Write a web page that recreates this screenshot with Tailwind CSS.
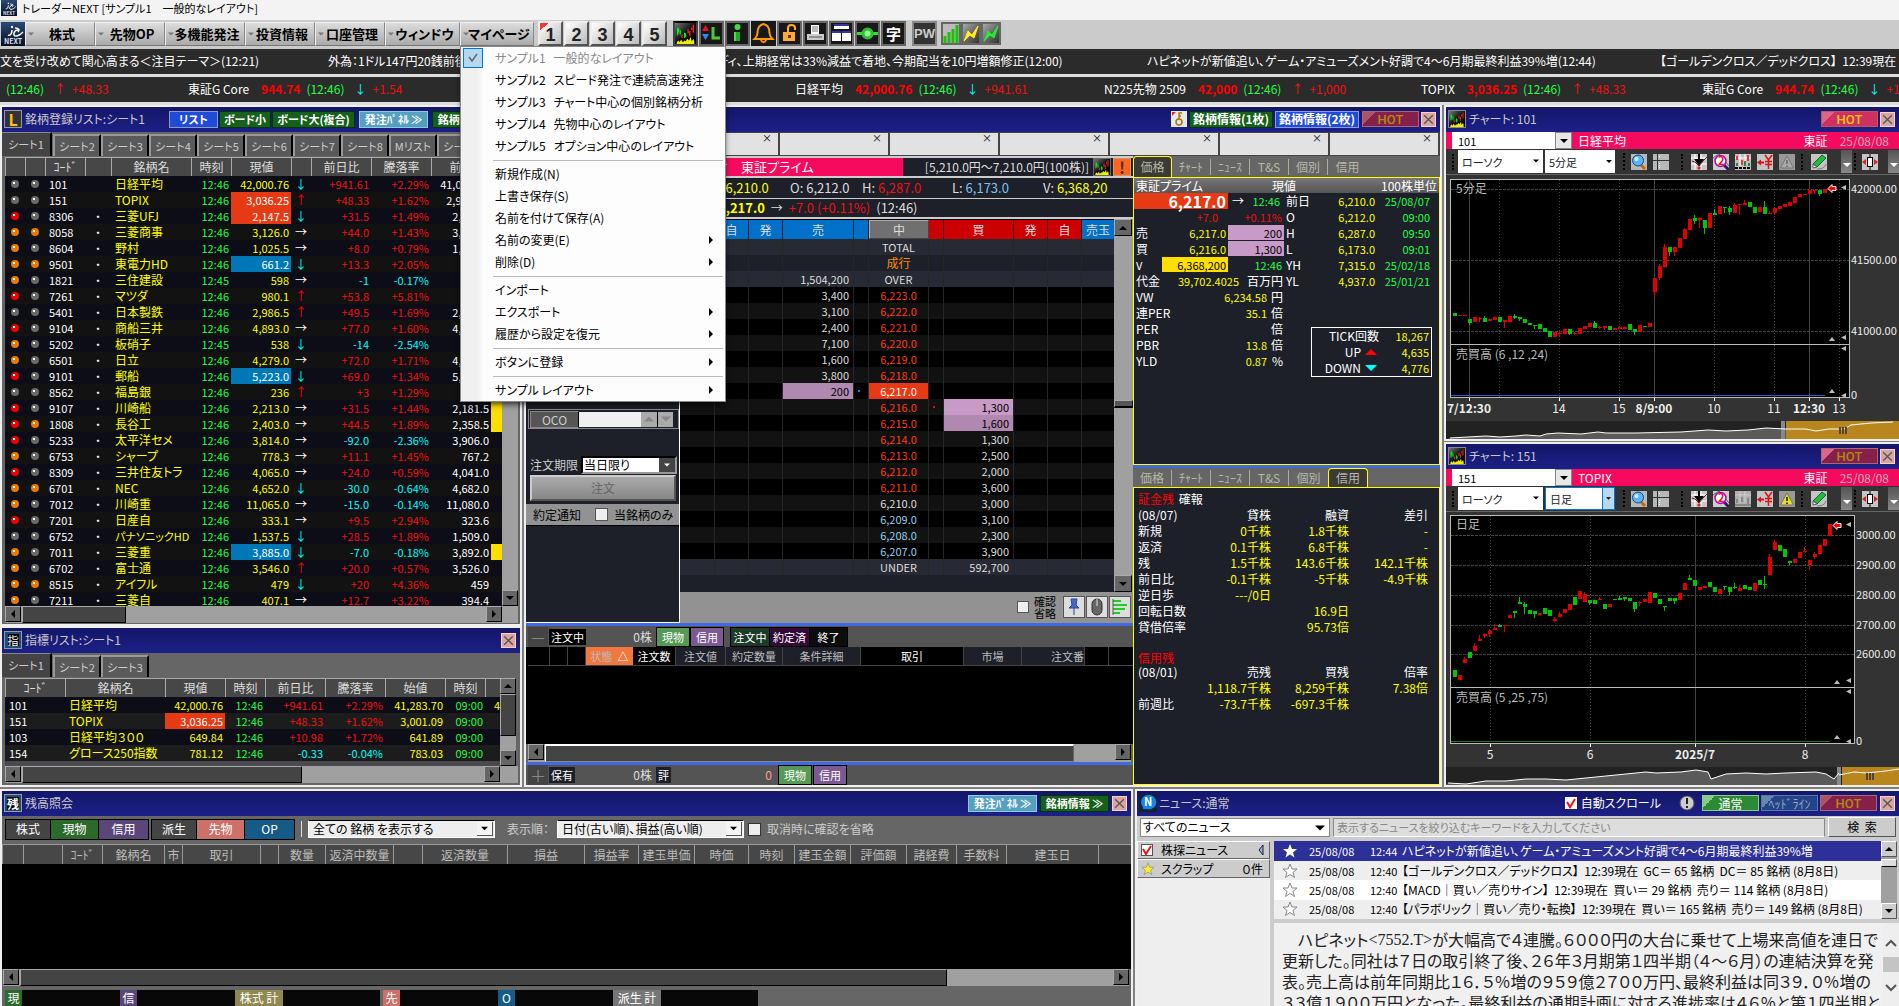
<!DOCTYPE html>
<html lang="ja">
<head>
    <meta charset="UTF-8">
    <meta name="viewport" content="width=device-width, initial-scale=1.0">
    <title>トレーダーNEXT [サンプル1 一般的なレイアウト]</title>
    <script src="https://cdn.jsdelivr.net/npm/@tailwindcss/browser@4"></script>
    <style>
        body {
            font-family: 'Noto Sans CJK JP', sans-serif;
            font-feature-settings: 'palt';
        }
        button, input, select { font-feature-settings: inherit; }
        table { border-collapse: separate; border-spacing: 0; }
    </style>
</head>
<body class="h-screen overflow-hidden flex flex-col bg-[#808080] text-xs leading-4 text-white whitespace-nowrap">

    <!-- Icon sprites -->
    <svg width="0" height="0" class="absolute">
        <defs>
            <linearGradient id="dark" x1="0" y1="0" x2="1" y2="1"><stop offset="0" stop-color="#777"/><stop offset=".5" stop-color="#111"/><stop offset="1" stop-color="#000"/></linearGradient>
            <linearGradient id="night" x1="0" y1="0" x2="0" y2="1"><stop offset="0" stop-color="#2a4a78"/><stop offset="1" stop-color="#04101f"/></linearGradient>
        </defs>
        <symbol id="up" viewBox="0 0 8 8"><path d="M0 6 4 2l4 4z" fill="currentColor"/></symbol>
        <symbol id="down" viewBox="0 0 8 8"><path d="M0 2l4 4 4-4z" fill="currentColor"/></symbol>
        <symbol id="left" viewBox="0 0 8 8"><path d="M6 0 2 4l4 4z" fill="currentColor"/></symbol>
        <symbol id="right" viewBox="0 0 8 8"><path d="M2 0l4 4-4 4z" fill="currentColor"/></symbol>
        <symbol id="close" viewBox="0 0 15 15"><path d="M2.500 2.500l10 10M12.500 2.500l-10 10" stroke="#555" stroke-width="1.500"/></symbol>
        <symbol id="logo" viewBox="0 0 24 24"><rect width="24" height="24" fill="url(#night)"/><path d="M7 13c2 1 4-1 4-5M14 6c4 0 5 2 3 4M17 8c-4 0-6 6-2 6 3 0 5-2 7-4" stroke="#fff" stroke-width="1.500" fill="none"/><circle cx="11" cy="5" r="1.200" fill="#fff"/><text x="3" y="22" font-size="7" font-weight="700" fill="#dde">NEXT</text></symbol>
        <symbol id="chart" viewBox="0 0 24 24"><rect width="24" height="24" fill="url(#dark)"/><path d="M3 6v8M4 5v6M11 11v6M12 12v4M6 8v5" stroke="#0e2" stroke-width="1.500"/><path d="M8 13v4M15 7v5M17 9v6M21 2v9M19 5v3" stroke="#f22" stroke-width="1.500"/><path d="M2 24v-2l2-2 1 2 2-3 2 3 2-2 1 1 2-3 2 2 2-4 1 5 2-3 1 3v3z" fill="#ee0"/></symbol>
        <symbol id="warn" viewBox="0 0 16 16"><rect width="16" height="16" fill="currentColor"/><path d="M8 2 14.500 14h-13z" fill="#e8e020" stroke="#776" /><path d="M8 6v4M8 11.500v1.500" stroke="#111" stroke-width="1.500"/></symbol>
        <symbol id="lens" viewBox="0 0 16 16"><rect width="16" height="16" fill="#b8b8b8"/><path d="M10 11l4 4" stroke="#c60" stroke-width="3"/><circle cx="7" cy="6.500" r="5.500" fill="#5ab4f8" stroke="#124a90"/><circle cx="5.500" cy="5" r="2" fill="#d8f0ff"/></symbol>
        <symbol id="cross" viewBox="0 0 16 16"><rect width="16" height="16" fill="#b8b8b8"/><path d="M0 6.500h16M4.500 0v16" stroke="#243a2a"/><path d="M6.500 2v2M6.500 9v5" stroke="#fff" stroke-dasharray="1 1"/></symbol>
        <symbol id="trend" viewBox="0 0 16 16"><rect width="16" height="16" fill="#c8c8c8"/><path d="M4 0v16M10 0v16M0 4h16M0 10h16" stroke="#fff"/><path d="M1 7l3 1 4 4 4-5 4-4" stroke="#622" fill="none"/><path d="M8 0v7M5 6h6l-3 4z" stroke="#000" stroke-width="2"/><path d="M8 12l2 2-2 2-2-2z" fill="#e22"/></symbol>
        <symbol id="lens2" viewBox="0 0 16 16"><rect width="16" height="16" fill="#ccc"/><path d="M0 4l6-4 10 12" stroke="#284" fill="none"/><path d="M11 11l5 5" stroke="#317" stroke-width="3"/><circle cx="7.500" cy="7" r="5.500" fill="#fff" stroke="#b0b" stroke-width="1.500"/><text x="5" y="11" font-size="11" font-weight="700" fill="#e11">2</text></symbol>
        <symbol id="bars" viewBox="0 0 16 16"><rect width="16" height="16" fill="#c0c0c0"/><path d="M5 0v12M10 0v12M0 4h16" stroke="#fff"/><path d="M2 2v4M7 6v5M13 1v6" stroke="#e33" stroke-width="2"/><path d="M2 9v3M10 7v5M14 9v3" stroke="#284" stroke-width="2"/><path d="M0 14h16" stroke="#000" stroke-width="2" stroke-dasharray="3 1"/></symbol>
        <symbol id="barsoff" viewBox="0 0 16 16"><rect width="16" height="16" fill="#b0b0b0"/><path d="M5 0v12M10 0v12M0 4h16" stroke="#ccc"/><path d="M2 8v4M7 6v5M13 7v6M0 14h16" stroke="#888" stroke-width="2"/></symbol>
        <symbol id="yen" viewBox="0 0 16 16"><rect width="16" height="16" fill="#c4c4c4"/><path d="M0 8.500l4-3v6z" fill="#d11"/><path d="M3 8.500h4" stroke="#d11" stroke-width="2"/><path d="M8 1l3.500 5L15 1M8 7.500h7M8 10.500h7M11.500 6v9" stroke="#d11" stroke-width="1.500" fill="none"/></symbol>
        <symbol id="pencil" viewBox="0 0 16 16"><rect width="16" height="16" fill="#c4c4c4"/><path d="M2 10 11 1l4 3-9 9z" fill="#2b3" stroke="#164"/><path d="M2 10l4 3-4 1z" fill="#fff" stroke="#555"/><path d="M6 15c4 0 8-1 9-5" stroke="#777" fill="none"/></symbol>
        <symbol id="candle" viewBox="0 0 16 16"><rect width="16" height="16" fill="#c4c4c4"/><path d="M8 0v16" stroke="#000"/><rect x="5.500" y="3.500" width="5" height="9" fill="#fff" stroke="#000"/><path d="M4 5v6L0 8zM12 5v6l4-3z" fill="#d22"/></symbol>
        <symbol id="star" viewBox="0 0 16 16"><path d="M8 1l2 5h5l-4 3.500 1.500 5L8 11.500 3.500 14.500 5 9.500 1 6h5z"/></symbol>
    </svg>

    <!-- Window title -->
    <header class="flex h-5 shrink-0 items-center gap-1 bg-[#f3f3f3] pl-px pb-1 text-black">
        <svg class="size-4"><use href="#logo"/></svg>
        <h1 class="pl-px text-[11px]">トレーダーNEXT [サンプル1　一般的なレイアウト]</h1>
    </header>

    <!-- Menu bar -->
    <nav class="flex h-[29px] shrink-0 items-center bg-[#cbcbcb] pb-0.5 text-[13px] font-bold text-black">
        <svg class="ml-px size-6 shrink-0"><use href="#logo"/></svg>
        <div id="menus" class="flex"></div>
        <div class="ml-1 flex gap-px" id="pages"></div>
        <div class="ml-1.5 flex gap-px">
            <button aria-label="チャート" class="size-[25px] border-2 border-[#444] border-t-black"><svg class="size-full"><use href="#chart"/></svg></button>
            <button aria-label="リスト" class="size-[25px] border-2 border-[#666] bg-[#181818]"><svg viewBox="0 0 21 21"><path d="M1 8 4.500 2 8 8z" fill="#e11"/><path d="M1 11l3.500 6L8 11z" fill="#38e"/><path d="M12 4v11h7" stroke="#4c3" stroke-width="3" fill="none"/></svg></button>
            <button aria-label="情報" class="size-[25px] border-2 border-[#666] bg-[#181818]"><svg viewBox="0 0 21 21"><circle cx="10.500" cy="4" r="3" fill="#4d4"/><path d="M7 9h6v9H7z" fill="#2a2"/><path d="M8 9v9" stroke="#8f8"/></svg></button>
            <button aria-label="アラーム" class="size-[25px] bg-[#181818]"><svg viewBox="0 0 25 25"><path d="M12.500 3c-5 1-6 5-6 9 0 3-2 5-3 6h18c-1-1-3-3-3-6 0-4-1-8-6-9zM10 19c1 3 4 3 5 0" fill="none" stroke="#f90" stroke-width="2"/></svg></button>
            <button aria-label="ロック" class="size-[25px] border-2 border-[#666] bg-[#181818]"><svg viewBox="0 0 21 21"><path d="M9 9V5c0-4 7-4 7 0v2" fill="none" stroke="#fa3" stroke-width="2"/><path d="M4 9h12v9H4z" fill="#fa3"/><path d="M9 12h3v3H9z" fill="#630"/></svg></button>
            <button aria-label="印刷" class="size-[25px] border-2 border-[#666] bg-[#181818]"><svg viewBox="0 0 21 21"><path d="M6 2h8v9H6z" fill="#fff"/><path d="M7 4h6M7 6h6M7 8h6" stroke="#777"/><path d="M2 11h17v6H2z" fill="#ccc"/><path d="M4 14h13" stroke="#555"/></svg></button>
            <button aria-label="ウィンドウ" class="size-[25px] border-2 border-[#666] bg-[#181818]"><svg viewBox="0 0 21 21"><path d="M3 2h15v4H3zM1 8h9v10H1zM11 8h9v10h-9z" fill="#fff"/><path d="M3 2h15M1 9h9M11 9h9" stroke="#33a" stroke-width="2"/></svg></button>
            <button aria-label="接続" class="size-[25px] border-2 border-[#666] bg-[#181818]"><svg viewBox="0 0 21 21"><path d="M0 10.500h21" stroke="#3d3" stroke-width="3"/><circle cx="10.500" cy="10.500" r="4.500" fill="#8f8" stroke="#3b3" stroke-width="3"/></svg></button>
            <button aria-label="文字" class="size-[25px] border-2 border-[#666] bg-[#181818] text-[15px] leading-5 text-white">字</button>
        </div>
        <button class="ml-1.5 size-[25px] border-2 border-[#888] bg-[#333] font-[Liberation_Sans] text-[13px] leading-5 text-[#ccc]">PW</button>
        <div class="ml-1 flex">
            <button aria-label="ランキング" class="h-[23px] w-5 border-2 border-[#666] bg-[#222]"><svg viewBox="0 0 16 19" class="bg-[#bbb]"><path d="M2 12v7M6 8v11M10 5v14M14 1v18" stroke="#2b1" stroke-width="3"/></svg></button>
            <button aria-label="スピード1" class="h-[23px] w-5 border-2 border-[#666] bg-linear-to-br from-[#aaa] to-[#333]"><svg viewBox="0 0 16 19"><path d="M1 17 5 7l4 4 6-9-4 12-4-3z" fill="#fe2" stroke="#fe2"/></svg></button>
            <button aria-label="スピード2" class="h-[23px] w-5 border-2 border-[#666] bg-linear-to-br from-[#aaa] to-[#333]"><svg viewBox="0 0 16 19"><path d="M1 17 5 7l4 4 6-9-4 12-4-3z" fill="#2e3" stroke="#2e3"/></svg></button>
        </div>
    </nav>

    <!-- Tickers -->
    <section class="flex h-[25px] shrink-0 items-center overflow-hidden bg-[#2b2b2b] pb-0.5">
        <span class="w-[328px] shrink-0">文を受け改めて関心高まる＜注目テーマ＞(12:21)</span>
        <span class="w-[389px] shrink-0">外為：1ドル147円20銭前後</span>
        <span class="w-[430px] shrink-0">ディ、上期経常は33%減益で着地、今期配当を10円増額修正(12:00)</span>
        <span class="w-[513px] shrink-0">ハピネットが新値追い、ゲーム・アミューズメント好調で4～6月期最終利益39%増(12:44)</span>
        <span class="shrink-0">【ゴールデンクロス／デッドクロス】&nbsp; 12:39現在&nbsp; GC＝</span>
    </section>
    <div class="h-[3px] shrink-0 bg-[#ddd]"></div>
    <section id="ticker" class="flex h-[25px] shrink-0 items-center overflow-hidden bg-[#2b2b2b] pb-0.5 pl-1.5"></section>
    <div class="h-[3px] shrink-0 bg-[#ddd]"></div>

    <main class="flex min-h-0 flex-1 gap-0.5 pb-0.5">

        <!-- Left column -->
        <div class="flex w-[522px] shrink-0 flex-col">
            <section class="flex min-h-0 flex-1 flex-col overflow-hidden border-2 border-[#f0f0f0] bg-[#666]">
                <div class="flex h-[25px] shrink-0 items-center gap-px bg-linear-to-b from-[#14166a] to-[#1c2086] pb-px pl-0.5">
                    <span class="grid size-[18px] place-items-center border border-black bg-[#333] text-base leading-4 font-bold text-[#fb2] outline outline-[#999] -outline-offset-1">L</span>
                    <h2 class="w-[145px] pl-0.5 text-[#c8c8c8]">銘柄登録リスト:シート1</h2>
                    <button class="h-[17px] w-[49px] border border-[#89c] bg-[#1f4bd8] text-[11px] leading-[14px] font-bold">リスト</button>
                    <button class="h-[17px] w-[52px] border border-[#031] bg-[#15601a] text-[11px] leading-[14px] font-bold">ボード小</button>
                    <button class="h-[17px] w-[83px] border border-[#031] bg-[#15601a] text-[11px] leading-[14px] font-bold">ボード大(複合)</button>
                    <button class="ml-[3px] h-[17px] w-[69px] border border-[#8cd] bg-[#55a0bf] text-[11px] leading-[14px] font-bold">発注ﾊﾟﾈﾙ ≫</button>
                    <button class="ml-[3px] h-[17px] w-[69px] border border-[#031] bg-[#15601a] text-[11px] leading-[14px] font-bold">銘柄情報 ≫</button>
                </div>
                <div id="tabs1" class="flex h-6 shrink-0 items-end pt-0.5 text-[#ccc]"></div>
                <div class="flex min-h-0 flex-1 pl-[3px] pt-px">
                    <div class="w-[497px] overflow-hidden bg-black">
                        <table class="w-full table-fixed">
                            <colgroup><col class="w-5"><col class="w-5"><col class="w-10"><col class="w-[26px]"><col class="w-20"><col class="w-10"><col class="w-[60px]"><col class="w-5"><col class="w-[60px]"><col class="w-[60px]"><col class="w-[60px]"><col></colgroup>
                            <thead><tr id="head1"></tr></thead>
                            <tbody id="watch"></tbody>
                        </table>
                    </div>
                    <div class="flex w-4 flex-col justify-between bg-[#a0a0a0]">
                        <button aria-label="上へ" class="grid size-4 place-items-center border border-r-black border-b-black border-t-[#aaa] border-l-[#aaa] bg-[#666] text-black"><svg class="size-2"><use href="#up"/></svg></button>
                        <button aria-label="下へ" class="grid size-4 place-items-center border border-r-black border-b-black border-t-[#aaa] border-l-[#aaa] bg-[#666] text-black"><svg class="size-2"><use href="#down"/></svg></button>
                    </div>
                </div>
                <div class="mb-px ml-[3px] mr-0.5 flex h-[17px] shrink-0 gap-px bg-[#a0a0a0] pr-4">
                    <button aria-label="左へ" class="grid size-4 place-items-center border border-r-black border-b-black border-t-[#aaa] border-l-[#aaa] bg-[#666] text-black"><svg class="size-2"><use href="#left"/></svg></button>
                    <div class="h-[17px] w-[104px] border border-r-black border-b-black border-t-[#aaa] border-l-[#aaa] bg-[#444]"></div>
                    <button aria-label="右へ" class="ml-auto grid size-4 place-items-center border border-r-black border-b-black border-t-[#aaa] border-l-[#aaa] bg-[#666] text-black"><svg class="size-2"><use href="#right"/></svg></button>
                </div>
            </section>

            <section class="flex h-[161px] shrink-0 flex-col overflow-hidden border-2 border-[#f0f0f0] bg-[#666]">
                <div class="flex h-[25px] shrink-0 items-center bg-linear-to-b from-[#14166a] to-[#1c2086] pb-px pl-0.5 pr-1">
                    <span class="grid size-[18px] place-items-center border border-[#999] bg-[#14507a] text-[11px]"><span class="bg-black leading-3">指</span></span>
                    <h2 class="flex-1 pl-[3px] text-[#c8c8c8]">指標リスト:シート1</h2>
                    <button aria-label="閉じる" class="size-[15px] border border-[#fcc] bg-[#d8a8a0]"><svg class="size-full"><use href="#close"/></svg></button>
                </div>
                <div id="tabs2" class="flex h-6 shrink-0 items-end pt-0.5 text-[#ccc]"></div>
                <div class="flex min-h-0 flex-1 pl-[3px] pt-px">
                    <div class="w-[495px] overflow-hidden bg-[#4a4a4e]">
                        <table class="w-full table-fixed">
                            <colgroup><col class="w-[60px]"><col class="w-[100px]"><col class="w-[60px]"><col class="w-10"><col class="w-[60px]"><col class="w-[60px]"><col class="w-[60px]"><col class="w-10"><col></colgroup>
                            <thead><tr id="head2"></tr></thead>
                            <tbody id="index"></tbody>
                        </table>
                    </div>
                    <div class="flex w-4 flex-col bg-[#a0a0a0]">
                        <button aria-label="上へ" class="grid size-4 place-items-center border border-r-black border-b-black border-t-[#aaa] border-l-[#aaa] bg-[#666] text-black"><svg class="size-2"><use href="#up"/></svg></button>
                        <div class="h-[42px] border border-r-black border-b-black border-t-[#aaa] border-l-[#aaa] bg-[#444]"></div>
                        <button aria-label="下へ" class="mt-auto grid size-4 place-items-center border border-r-black border-b-black border-t-[#aaa] border-l-[#aaa] bg-[#666] text-black"><svg class="size-2"><use href="#down"/></svg></button>
                    </div>
                </div>
                <div class="mb-0.5 ml-[3px] mr-0.5 flex h-[17px] shrink-0 gap-px bg-[#a0a0a0] pr-[18px]">
                    <button aria-label="左へ" class="grid size-4 place-items-center border border-r-black border-b-black border-t-[#aaa] border-l-[#aaa] bg-[#666] text-black"><svg class="size-2"><use href="#left"/></svg></button>
                    <div class="w-[280px] border border-r-black border-b-black border-t-[#aaa] border-l-[#aaa] bg-[#444]"></div>
                    <button aria-label="右へ" class="ml-auto grid size-4 place-items-center border border-r-black border-b-black border-t-[#aaa] border-l-[#aaa] bg-[#666] text-black"><svg class="size-2"><use href="#right"/></svg></button>
                </div>
            </section>
        </div>

        <!-- Order / board panel -->
        <section class="flex min-w-0 flex-1 flex-col overflow-hidden border-2 border-[#f0f0f0] bg-[#666]">
            <div class="flex h-[25px] shrink-0 items-center justify-end gap-0.5 bg-linear-to-b from-[#14166a] to-[#1c2086] pb-px pr-1">
                <button aria-label="固定" class="size-4 bg-[#e8e8e8]"><svg viewBox="0 0 16 16"><path d="M1 1h4L1 5z" fill="#e22"/><circle cx="8" cy="11" r="3" fill="none" stroke="#a70" stroke-width="1.500"/><path d="M8 8V2h3M8 5h2" fill="none" stroke="#a70" stroke-width="1.500"/></svg></button>
                <button class="h-[17px] w-[84px] border border-[#031] bg-[#15601a] text-xs leading-[14px] font-bold">銘柄情報(1枚)</button>
                <button class="h-[17px] w-[84px] border border-[#89e] bg-[#1f4bd8] text-xs leading-[14px] font-bold">銘柄情報(2枚)</button>
                <button class="relative ml-px h-4 w-[57px] overflow-hidden border border-[#a67] bg-[#85204a] font-[Roboto] text-[13px] leading-[13px] font-medium text-[#b08a10]"><span class="absolute left-0 top-0 size-3 bg-linear-to-br from-[#a56] from-50% to-transparent to-50%"></span>HOT</button>
                <button aria-label="閉じる" class="size-[15px] border border-[#fcc] bg-[#d8a8a0]"><svg class="size-full"><use href="#close"/></svg></button>
            </div>
            <!-- history slots -->
            <div id="slots" class="flex h-6 shrink-0 overflow-hidden bg-[#444] py-px"></div>
            <div class="flex min-h-0 flex-1">
                <div class="flex min-w-0 flex-1 flex-col">
                    <div class="flex h-[467px] shrink-0 bg-[#929292]">
                        <!-- order form -->
                        <form class="flex w-[154px] shrink-0 flex-col border-r border-b border-white bg-[#1d1f29] pl-0.5 text-[#ccc]">
                            <div class="mt-[253px] flex h-5 items-center border border-[#888] p-px">
                                <button type="button" class="h-[17px] w-[49px] border border-[#888] border-r-black bg-[#555] text-xs leading-4">OCO</button>
                                <input aria-label="OCO価格" class="h-[15px] w-[62px] bg-[#f0f0f0]">
                                <button type="button" aria-label="増やす" class="grid h-[15px] w-4 place-items-center bg-[#aaa] text-[#888]"><svg class="size-2.5"><use href="#up"/></svg></button>
                                <button type="button" aria-label="減らす" class="grid h-[15px] w-4 place-items-center border-l border-black bg-[#aaa] text-[#888]"><svg class="size-2.5"><use href="#down"/></svg></button>
                            </div>
                            <div class="mt-[26px] flex h-[19px] items-center gap-[3px] pl-0.5">
                                <label for="limit">注文期限</label>
                                <span class="relative flex h-[18px] w-[96px] border-2 border-t-black border-l-black border-[#999] bg-white text-black">
                                    <select id="limit" class="w-full appearance-none pl-px leading-[14px]"><option>当日限り</option></select>
                                    <svg class="pointer-events-none absolute right-0 top-0 h-[14px] w-4 bg-[#444] p-1 text-white"><use href="#down"/></svg>
                                </span>
                            </div>
                            <button type="button" class="ml-0.5 mt-px h-[26px] w-[146px] border-2 border-t-[#ccc] border-l-[#ccc] border-[#555] bg-linear-to-b from-[#aaa] to-[#888] text-[#666]">注文</button>
                            <div class="-ml-0.5 mt-[3px] flex h-[22px] items-center border-b border-black bg-[#929292] pl-[7px] text-black">
                                <span>約定通知</span>
                                <input id="only" type="checkbox" class="ml-3.5 size-[13px] appearance-none border border-[#555] bg-[#eee]">
                                <label for="only" class="pl-1.5">当銘柄のみ</label>
                            </div>
                        </form>
                        <!-- ladder -->
                        <div class="flex min-w-0 flex-1 flex-col">
                            <div class="flex h-[22px] items-center border-y-2 border-[#ccc] bg-[#1d1f29]">
                                <div class="flex h-[18px] flex-1 bg-[#f60a5e] text-[13px] leading-[18px]"><span class="w-[47px] text-right">貸す</span><span class="pl-3.5">東証プライム</span></div>
                                <div class="w-[190px] pr-1 text-right text-xs text-[#ddd]">[5,210.0円～7,210.0円(100株)]</div>
                                <button aria-label="チャート" class="size-[18px] border border-[#666]"><svg class="size-full"><use href="#chart"/></svg></button>
                                <button class="ml-0.5 mr-0.5 size-[18px] border border-[#c96] bg-[#ff6420] text-base leading-4 font-bold text-[#432]">!</button>
                            </div>
                            <div class="flex h-[21px] items-center border-b border-[#ccc] bg-[#1d1f29] pl-[26px] text-[13px] text-[#ddd]">
                                <span class="w-[84px]">基: <i class="text-[#ff0] not-italic">6,210.0</i></span>
                                <span class="w-[72px]">O: 6,212.0</span>
                                <span class="w-[90px]">H: <i class="text-[#f01010] not-italic">6,287.0</i></span>
                                <span class="w-[91px]">L: <i class="text-[#7cc4f0] not-italic">6,173.0</i></span>
                                <span>V: <i class="text-[#ff0] not-italic">6,368,20</i></span>
                            </div>
                            <div class="flex h-5 items-center gap-1.5 border-b-2 border-[#ccc] bg-[#1d1f29] pl-[38px] text-[13px] text-[#ddd]">
                                <b class="text-[#ff0]">6,217.0</b><span class="text-xs">→</span><span class="text-[#f01010]">+7.0 (+0.11%)</span><span>(12:46)</span>
                            </div>
                            <div class="flex flex-1">
                                <div class="min-w-0 flex-1 border-t border-black bg-[#1d1f29]">
                                    <table class="w-full table-fixed">
                                        <colgroup><col class="w-[35px]"><col class="w-[34px]"><col class="w-[34px]"><col><col class="w-[15px]"><col class="w-[60px]"><col class="w-[15px]"><col class="w-[70px]"><col class="w-[34px]"><col class="w-[34px]"><col class="w-8"></colgroup>
                                        <thead><tr class="h-[19px] text-[#ddd]">
                                            <th class="border-r border-[#123] bg-[#0070c8] font-normal">売玉</th><th class="border-r border-[#123] bg-[#0070c8] font-normal">自</th><th class="border-r border-[#123] bg-[#0070c8] font-normal">発</th><th class="border-r border-[#123] bg-[#0070c8] font-normal">売</th><th class="border-r border-[#123] bg-[#0070c8]"></th>
                                            <th class="border border-t-[#aaa] border-l-[#aaa] border-[#444] bg-[#707070] font-normal">中</th>
                                            <th class="border-r border-[#311] bg-[#cc0000]"></th><th class="border-r border-[#311] bg-[#cc0000] font-normal">買</th><th class="border-r border-[#311] bg-[#cc0000] font-normal">発</th><th class="border-r border-[#311] bg-[#cc0000] font-normal">自</th><th class="bg-[#0070c8] font-normal">売玉</th>
                                        </tr></thead>
                                        <tbody id="ladder"></tbody>
                                    </table>
                                </div>
                                <div class="mb-[31px] flex w-[19px] flex-col bg-[#a0a0a0]">
                                    <button aria-label="上へ" class="grid h-[17px] w-[18px] place-items-center border border-r-black border-b-black border-t-[#aaa] border-l-[#aaa] bg-[#666] text-black"><svg class="size-2"><use href="#up"/></svg></button>
                                    <div class="mt-[164px] h-2 border border-b-2 border-r-black border-b-black border-t-[#aaa] border-l-[#aaa] bg-[#555]"></div>
                                    <button aria-label="下へ" class="mt-auto grid h-[17px] w-[18px] place-items-center border border-r-black border-b-black border-t-[#aaa] border-l-[#aaa] bg-[#666] text-black"><svg class="size-2"><use href="#down"/></svg></button>
                                </div>
                            </div>
                            <div class="-mt-[31px] flex h-[31px] items-center justify-end gap-px bg-[#929292] pb-0.5 text-[11px] leading-3 text-black">
                                <input id="skip" type="checkbox" class="mr-1 size-3 appearance-none border border-[#555] bg-[#eee]">
                                <label for="skip" class="mr-1.5">確認<br>省略</label>
                                <button aria-label="ピン" class="size-[22px] border border-[#555] bg-[#ddd]"><svg viewBox="0 0 20 20"><path d="M7 2h6l-1 6 3 3H5l3-3zM10 11v7" fill="#46c" stroke="#348"/></svg></button>
                                <button aria-label="マウス" class="size-[22px] border border-[#555] bg-[#ddd]"><svg viewBox="0 0 20 20"><rect x="5" y="2" width="10" height="16" rx="5" fill="#666" stroke="#333"/><path d="M10 2v7" stroke="#ddd"/></svg></button>
                                <button aria-label="板" class="mr-0.5 size-[22px] border border-[#555] bg-[#ddd]"><svg viewBox="0 0 20 20"><path d="M3 4h8M3 8h14M3 12h12M3 16h7" stroke="#2c2" stroke-width="2"/><path d="M3 2v16" stroke="#555"/></svg></button>
                            </div>
                        </div>
                    </div>
                    <!-- orders -->
                    <div class="flex h-6 shrink-0 items-center border-t-[3px] border-[#4169e1] bg-[#545454] pl-0.5">
                        <button class="h-5 w-5 bg-[#444] text-base leading-5 text-[#888]">－</button>
                        <span class="ml-px bg-black px-0.5 text-[11px]">注文中</span>
                        <span class="w-[66px] text-right text-[#ddd]">0株</span>
                        <button class="ml-1 h-5 w-[34px] border border-black bg-[#559955] text-[11px] leading-4">現物</button>
                        <button class="h-5 w-[34px] border border-black bg-[#7a5a90] text-[11px] leading-4">信用</button>
                        <button class="ml-1.5 h-5 w-10 border border-black bg-[#1d3b28] text-[11px] leading-4">注文中</button>
                        <button class="h-5 w-[39px] border-y border-black bg-[#330a38] text-[11px] leading-4">約定済</button>
                        <button class="h-5 w-[39px] border border-black bg-[#0c0c0c] text-[11px] leading-4">終了</button>
                    </div>
                    <div class="min-h-0 flex-1 bg-black pl-0.5">
                        <table class="w-full table-fixed text-[11px] text-[#bbb]">
                            <colgroup><col class="w-[22px]"><col class="w-[18px]"><col class="w-[18px]"><col class="w-[47px]"><col class="w-[43px]"><col class="w-[50px]"><col class="w-[57px]"><col class="w-[78px]"><col><col class="w-[58px]"><col class="w-[63px]"><col class="w-6"><col class="w-6"></colgroup>
                            <thead><tr class="h-[19px]">
                                <th class="border-r border-b border-[#444]"></th><th class="border-r border-b border-[#444]"></th><th class="border-r border-b border-[#444]"></th>
                                <th class="border-b border-[#444] bg-[#f37840] font-normal">状態&nbsp; <b class="text-white">△</b></th><th class="border-r border-b border-[#444] font-normal text-white">注文数</th><th class="border-r border-b border-[#444] bg-[#1d1f29] font-normal">注文値</th><th class="border-r border-b border-[#444] bg-[#1d1f29] font-normal">約定数量</th><th class="border-r border-b border-[#444] bg-[#1d1f29] font-normal">条件詳細</th><th class="border-r border-b border-[#444] font-normal text-white">取引</th><th class="border-r border-b border-[#444] bg-[#1d1f29] font-normal">市場</th><th class="border-r border-b border-[#444] bg-[#1d1f29] text-right font-normal">注文番</th><th class="border-r border-b border-[#444]"></th><th class="border-b border-[#444]"></th>
                            </tr></thead>
                        </table>
                    </div>
                    <div class="ml-0.5 mr-0.5 flex h-[18px] shrink-0 gap-px bg-[#a0a0a0]">
                        <button aria-label="左へ" class="grid size-4 place-items-center border border-r-black border-b-black border-t-[#aaa] border-l-[#aaa] bg-[#666] text-black"><svg class="size-2"><use href="#left"/></svg></button>
                        <div class="w-[529px] border border-t-2 border-white border-r-[#666] border-b-[#888] bg-[#444]"></div>
                        <button aria-label="右へ" class="ml-auto grid size-4 place-items-center border border-r-black border-b-black border-t-[#aaa] border-l-[#aaa] bg-[#666] text-black"><svg class="size-2"><use href="#right"/></svg></button>
                    </div>
                    <div class="flex h-[23px] shrink-0 items-center border-t-[3px] border-[#4169e1] bg-[#545454] pl-0.5">
                        <button class="h-5 w-5 bg-[#444] text-base leading-5 text-[#888]">＋</button>
                        <span class="ml-px bg-[#1d1f29] px-0.5 text-[11px]">保有</span>
                        <span class="w-[77px] text-right text-[#ddd]">0株</span>
                        <span class="ml-1 bg-[#1d1f29] px-0.5 text-[11px]">評</span>
                        <span class="w-[101px] text-right text-[#f99]">0</span>
                        <button class="ml-1.5 h-5 w-[34px] border border-black bg-[#559955] text-[11px] leading-4">現物</button>
                        <button class="ml-px h-5 w-[34px] border border-black bg-[#7a5a90] text-[11px] leading-4">信用</button>
                    </div>
                </div>

                <!-- quote info -->
                <div class="flex w-[307px] shrink-0 flex-col">
                    <div class="flex h-[21px] shrink-0 items-center text-[#b8b8a8]">
                        <button class="h-full w-[39px] rounded-t border border-b-0 border-[#ff0] bg-[#3a3a36]">価格</button>
                        <button class="w-[39px] border-r border-[#aa9]">ﾁｬｰﾄ</button>
                        <button class="w-[39px] border-r border-[#aa9]">ﾆｭｰｽ</button>
                        <button class="w-[39px] border-r border-[#aa9]">T&amp;S</button>
                        <button class="w-[39px] border-r border-[#aa9]">個別</button>
                        <button class="w-[39px]">信用</button>
                    </div>
                    <div class="h-[288px] shrink-0 border border-[#ff0] bg-[#1d1f29]">
                        <div class="flex h-[15px] justify-between bg-linear-to-b from-[#777] to-[#555] px-0.5 leading-[15px]"><span>東証プライム</span><span class="-ml-4">現値</span><span>100株単位</span></div>
                        <div class="flex text-[11px] leading-4">
                            <div id="quoteL" class="w-[152px]"></div>
                            <div id="quoteR" class="w-[144px]"></div>
                        </div>
                        <div class="-mt-[42px] ml-auto mr-[7px] w-[121px] border border-white px-0.5 text-[11px] leading-4">
                            <div class="flex justify-end gap-3.5"><span class="text-xs leading-4">TICK回数</span><span class="w-9 text-right text-[#ff0]">18,267</span></div>
                            <div class="flex justify-end"><span class="text-xs leading-4">UP</span><svg class="mx-1 mt-0.5 size-3 text-[#f00]"><use href="#up"/></svg><span class="w-12 text-right text-[#ff0]">4,635</span></div>
                            <div class="flex justify-end"><span class="text-xs leading-4">DOWN</span><svg class="mx-1 mt-0.5 size-3 text-[#0ff]"><use href="#down"/></svg><span class="w-12 text-right text-[#ff0]">4,776</span></div>
                        </div>
                    </div>
                    <div class="flex h-[22px] shrink-0 items-center border-t-[3px] border-[#4169e1] text-[#b8b8a8]">
                        <button class="w-[39px] border-r border-[#aa9]">価格</button>
                        <button class="w-[39px] border-r border-[#aa9]">ﾁｬｰﾄ</button>
                        <button class="w-[39px] border-r border-[#aa9]">ﾆｭｰｽ</button>
                        <button class="w-[39px] border-r border-[#aa9]">T&amp;S</button>
                        <button class="w-[39px]">個別</button>
                        <button class="h-full w-10 rounded-t border border-b-0 border-[#ff0] bg-[#3a3a36]">信用</button>
                    </div>
                    <div class="flex-1 border border-[#ff0] bg-[#1d1f29] pl-1 pt-[3px]">
                        <table class="w-[290px] table-fixed">
                            <colgroup><col class="w-[52px]"><col><col class="w-[78px]"><col class="w-[79px]"></colgroup>
                            <tbody id="margin"></tbody>
                        </table>
                    </div>
                </div>
            </div>
        </section>

        <!-- Charts -->
        <div class="flex w-[455px] shrink-0 flex-col gap-px" id="charts"></div>
    </main>

    <!-- Bottom -->
    <div class="flex h-[217px] shrink-0 gap-0.5">
        <section class="flex w-[1133px] shrink-0 flex-col overflow-hidden border-2 border-b-0 border-[#f0f0f0] bg-[#666]">
            <div class="flex h-[25px] shrink-0 items-center gap-[3px] bg-linear-to-b from-[#14166a] to-[#1c2086] pb-px pl-0.5 pr-1">
                <span class="grid size-[18px] place-items-center border border-[#999] bg-[#14507a] text-xs font-bold"><span class="bg-black leading-[13px]">残</span></span>
                <h2 class="flex-1 text-[#c8c8c8]">残高照会</h2>
                <button class="h-[17px] w-[69px] border border-[#8cd] bg-[#55a0bf] text-[11px] leading-[14px] font-bold">発注ﾊﾟﾈﾙ ≫</button>
                <button class="h-[17px] w-[69px] border border-[#031] bg-[#15601a] text-[11px] leading-[14px] font-bold">銘柄情報 ≫</button>
                <button aria-label="閉じる" class="size-[15px] border border-[#fcc] bg-[#d8a8a0]"><svg class="size-full"><use href="#close"/></svg></button>
            </div>
            <div class="flex h-7 shrink-0 items-center pl-[3px] pb-0.5">
                <div class="flex h-[21px] border border-black bg-[#444]">
                    <button class="w-11">株式</button><button class="w-[49px] border-x border-black bg-[#2c6a2c]">現物</button><button class="w-[49px] bg-[#5a4678]">信用</button>
                </div>
                <div class="ml-0.5 flex h-[21px] border border-black bg-[#444]">
                    <button class="w-11">派生</button><button class="w-[49px] border-x border-black bg-[#cc7068]">先物</button><button class="w-[49px] bg-[#165a86]">OP</button>
                </div>
                <span class="mx-1.5 h-4 w-px bg-[#ddd]"></span>
                <span class="relative flex h-[18px] w-[187px] border border-t-black border-white bg-[#eee] text-black">
                    <select aria-label="銘柄" class="w-full appearance-none pl-1 leading-4"><option>全ての 銘柄 を表示する</option></select>
                    <svg class="pointer-events-none absolute right-px top-px h-[14px] w-4 border-r border-b border-[#555] bg-[#f4f4f4] p-[3px]"><use href="#down"/></svg>
                </span>
                <label for="sort" class="ml-3 w-[50px] text-[#ccc]">表示順：</label>
                <span class="relative flex h-[18px] w-[187px] border border-t-black border-white bg-[#eee] text-black">
                    <select id="sort" class="w-full appearance-none pl-1 leading-4"><option>日付(古い順)、損益(高い順)</option></select>
                    <svg class="pointer-events-none absolute right-px top-px h-[14px] w-4 border-r border-b border-[#555] bg-[#f4f4f4] p-[3px]"><use href="#down"/></svg>
                </span>
                <input id="nocheck" type="checkbox" class="ml-1 size-[13px] appearance-none border border-[#333] bg-[#eee]">
                <label for="nocheck" class="ml-1.5 text-[#ccc]">取消時に確認を省略</label>
            </div>
            <div class="min-h-0 flex-1 bg-black">
                <table class="w-full table-fixed"><thead><tr id="head3"></tr></thead></table>
            </div>
            <div class="ml-px mr-0.5 flex h-[17px] shrink-0 gap-px bg-[#a0a0a0]">
                <button aria-label="左へ" class="grid size-4 place-items-center border border-r-black border-b-black border-t-[#aaa] border-l-[#aaa] bg-[#666] text-black"><svg class="size-2"><use href="#left"/></svg></button>
                <div class="w-[927px] border border-r-black border-b-black border-t-[#aaa] border-l-[#aaa] bg-[#444]"></div>
                <button aria-label="右へ" class="ml-auto grid size-4 place-items-center border border-r-black border-b-black border-t-[#aaa] border-l-[#aaa] bg-[#666] text-black"><svg class="size-2"><use href="#right"/></svg></button>
            </div>
            <div class="mt-1 flex h-4 shrink-0 overflow-hidden pl-[3px] leading-[15px]">
                <div class="flex w-[115px] bg-[#080808]"><span class="w-[17px] bg-[#2c6a2c] text-center">現</span></div>
                <div class="flex w-[115px] bg-[#080808]"><span class="w-[17px] bg-[#5a4678] text-center">信</span></div>
                <div class="mr-[3px] flex w-[145px] bg-[#080808]"><span class="w-12 bg-[#8f8850] text-center">株式 計</span></div>
                <div class="flex w-[115px] bg-[#080808]"><span class="w-[17px] bg-[#cc7068] text-center">先</span></div>
                <div class="flex w-[115px] bg-[#080808]"><span class="w-[17px] bg-[#165a86] text-center">O</span></div>
                <div class="flex w-[145px] bg-[#080808]"><span class="w-12 bg-[#777] text-center">派生 計</span></div>
            </div>
        </section>

        <!-- News -->
        <section class="flex min-w-0 flex-1 flex-col overflow-hidden border-2 border-r-0 border-b-0 border-[#f0f0f0] bg-[#ccc] text-black">
            <div class="flex h-[25px] shrink-0 items-center bg-linear-to-b from-[#14166a] to-[#1c2086] pb-px pl-0.5 pr-1 text-white">
                <svg viewBox="0 0 18 18" class="size-[18px] bg-[#123]"><path d="M4 15v-4a7 7 0 1 1 5 4z" fill="#18e"/><circle cx="9" cy="8" r="7" fill="#18e"/><text x="5" y="12" font-size="11" font-weight="700" fill="#fff">N</text></svg>
                <h2 class="flex-1 pl-0.5 text-[#c8c8c8]">ニュース:通常</h2>
                <label class="flex items-center gap-1"><span class="relative flex"><input type="checkbox" checked class="size-3 appearance-none bg-white"><svg viewBox="0 0 12 12" class="pointer-events-none absolute size-3"><path d="M2 5l3 5 5-8" stroke="#e11" stroke-width="2" fill="none"/></svg></span>自動スクロール</label>
                <svg viewBox="0 0 16 16" class="ml-[18px] size-4"><circle cx="8" cy="8" r="7" fill="#ccc" stroke="#555"/><path d="M8 3v6M8 11v2" stroke="#222" stroke-width="2"/></svg>
                <button class="relative ml-[7px] h-4 w-[57px] overflow-hidden border border-[#8c8] bg-[#2c8a34] text-xs leading-[13px]"><span class="absolute left-0 top-0 size-3 bg-linear-to-br from-[#8c8] from-50% to-transparent to-50%"></span>通常</button>
                <button class="relative ml-0.5 h-4 w-[57px] overflow-hidden border border-[#57a] bg-[#24448a] text-xs leading-[13px] text-[#9ab]"><span class="absolute left-0 top-0 size-3 bg-linear-to-br from-[#68a] from-50% to-transparent to-50%"></span>ﾍｯﾄﾞﾗｲﾝ</button>
                <button class="relative ml-0.5 h-4 w-[57px] overflow-hidden border border-[#a67] bg-[#85204a] font-[Roboto] text-[13px] leading-[13px] font-medium text-[#b08a10]"><span class="absolute left-0 top-0 size-3 bg-linear-to-br from-[#a56] from-50% to-transparent to-50%"></span>HOT</button>
                <button aria-label="閉じる" class="ml-[3px] size-[15px] border border-[#fcc] bg-[#d8a8a0]"><svg class="size-full"><use href="#close"/></svg></button>
            </div>
            <div class="flex h-[25px] shrink-0 items-center gap-[3px] px-[3px] pb-1 pt-px">
                <span class="relative flex h-[19px] w-[190px] border border-[#888] bg-white">
                    <select aria-label="種別" class="w-full appearance-none pl-0.5 leading-4"><option>すべてのニュース</option></select>
                    <svg class="pointer-events-none absolute right-1 top-1 size-2.5"><use href="#down"/></svg>
                </span>
                <input aria-label="キーワード" placeholder="表示するニュースを絞り込むキーワードを入力してください" class="h-[19px] min-w-0 flex-1 border border-[#888] border-b-white bg-[#ddd] px-[3px] text-[11px] placeholder:text-[#888]">
                <button class="h-5 w-[68px] border border-white border-r-[#555] border-b-[#555] bg-[#ccc]">検&nbsp; 索</button>
            </div>
            <div class="flex min-h-0 flex-1">
                <div class="w-[133px] shrink-0 bg-[#eee]">
                    <label class="flex h-[18px] items-center border border-white border-b-[#666] border-r-[#666] bg-[#ccc] pl-[3px]"><span class="relative flex"><input type="checkbox" checked class="size-3 appearance-none border border-[#555] bg-white"><svg viewBox="0 0 12 12" class="pointer-events-none absolute size-3"><path d="M2 5l3 5 5-8" stroke="#e11" stroke-width="2" fill="none"/></svg></span><span class="flex-1 pl-2">株探ニュース</span><svg viewBox="0 0 8 10" class="mr-1 h-2.5 w-2"><path d="M6 0v10L2 5z" fill="#aac" stroke="#124"/></svg></label>
                    <div class="flex h-[19px] items-center border border-white border-b-[#666] border-r-[#666] bg-[#ccc] pl-[3px] pr-1.5"><svg class="size-3.5 fill-[#fe2] stroke-[#999]"><use href="#star"/></svg><span class="flex-1 pl-1.5">スクラップ</span><span>０件</span></div>
                </div>
                <div class="flex min-w-0 flex-1 flex-col pl-1">
                    <div class="flex h-[78px] shrink-0">
                        <table class="flex-1"><tbody id="news"></tbody></table>
                        <div class="flex w-4 flex-col bg-[#a0a0a0]">
                            <button aria-label="上へ" class="grid size-4 place-items-center border border-white border-r-[#555] border-b-[#555] bg-[#ccc]"><svg class="size-2"><use href="#up"/></svg></button>
                            <div class="mt-0.5 h-2 border border-white border-r-[#555] border-b-black bg-[#ddd]"></div>
                            <button aria-label="下へ" class="mt-auto grid size-4 place-items-center border border-white border-r-[#555] border-b-[#555] bg-[#ccc]"><svg class="size-2"><use href="#down"/></svg></button>
                        </div>
                        <span class="w-0.5"></span>
                    </div>
                    <div class="mt-1 flex min-h-0 flex-1 bg-[#f0f0f0]">
                        <article class="flex-1 overflow-hidden pl-2 pt-1.5 text-base leading-[21px] text-[#222]">
                            <p>　ハピネット<span class="align-top font-[Liberation_Serif]">&lt;7552.T&gt;</span>が大幅高で４連騰。６０００円の大台に乗せて上場来高値を連日で</p>
                            <p>更新した。同社は７日の取引終了後、２６年３月期第１四半期（４～６月）の連結決算を発</p>
                            <p>表。売上高は前年同期比１６．５％増の９５９億２７００万円、最終利益は同３９．０％増の</p>
                            <p>３３億１９００万円となった。最終利益の通期計画に対する進捗率は４６％と第１四半期と</p>
                        </article>
                        <div class="flex w-4 flex-col items-center bg-[#eee] pt-4 text-[#555]">
                            <svg viewBox="0 0 12 8" class="h-2 w-3"><path d="M1 7l5-5 5 5" stroke="currentColor" stroke-width="2" fill="none"/></svg>
                            <div class="mt-2.5 h-[15px] w-4 bg-[#c4c4c4]"></div>
                            <svg viewBox="0 0 12 8" class="mt-3 h-2 w-3"><path d="M1 1l5 5 5-5" stroke="currentColor" stroke-width="2" fill="none"/></svg>
                        </div>
                    </div>
                </div>
            </div>
        </section>
    </div>

    <!-- My page menu -->
    <div role="menu" id="mypage" class="absolute left-[460px] top-[46px] w-[266px] border border-[#888] bg-linear-to-r from-[#f0f0f0] from-6% to-[#fdfdfd] to-9% pr-0.5 text-black shadow-md shadow-black/50"></div>

    <script>
        const $ = id => document.getElementById(id);
        const each = (list, fn) => list.map(fn).join('');

        // menu bar
        $('menus').innerHTML = each([['株式', 'w-[70px]'], ['先物OP', 'w-[70px]'], ['多機能発注', 'w-20'], ['投資情報', 'w-[70px]'], ['口座管理', 'w-[70px]'], ['ウィンドウ', 'w-[75px]'], ['マイページ', 'w-[74px]']],
            ([t, w]) => `<button class="${w} relative h-6 border border-t-[#eee] border-l-[#eee] border-r-[#888] border-b-[#777] bg-linear-to-b from-[#ddd] to-[#aaa] pl-1"><svg class="absolute left-0.5 top-2 size-1.5 text-[#777]"><use href="#down"/></svg>${t}</button>`);
        $('pages').innerHTML = each([1, 2, 3, 4, 5],
            n => `<button class="relative size-[25px] border-2 border-t-[#eee] border-l-[#eee] border-[#555] bg-linear-to-br from-white to-[#bbb] font-[Liberation_Sans] text-lg leading-6 text-[#222]">${n === 1 ? '<span class="absolute left-0 top-0 size-2 bg-linear-to-br from-[#f33] from-50% to-transparent to-50%"></span>' : ''}${n}</button>`);

        $('mypage').innerHTML = each([
            'サンプル1&nbsp;&nbsp; 一般的なレイアウト*', 'サンプル2&nbsp;&nbsp; スピード発注で連続高速発注', 'サンプル3&nbsp;&nbsp; チャート中心の個別銘柄分析', 'サンプル4&nbsp;&nbsp; 先物中心のレイアウト', 'サンプル5&nbsp;&nbsp; オプション中心のレイアウト', '-',
            '新規作成(N)', '上書き保存(S)', '名前を付けて保存(A)', '名前の変更(E)>', '削除(D)>', '-',
            'インポート', 'エクスポート>', '履歴から設定を復元>', '-', 'ボタンに登録>', '-', 'サンプル レイアウト>'
        ], t => {
            if (t === '-') return '<hr class="mb-0.5 ml-8 mt-[3px] border-[#bbb]">';
            if (t.endsWith('*')) return `<button role="menuitem" class="flex h-[22px] w-full items-center text-[#888]"><span class="ml-0.5 mr-3 grid size-5 place-items-center border border-[#0078d7] bg-[#b4d8f2]"><svg viewBox="0 0 10 10" class="size-2.5"><path d="M1 4l3 4 5-7" stroke="#666" stroke-width="1.500" fill="none"/></svg></span>${t.slice(0, -1)}</button>`;
            const sub = t.endsWith('>');
            return `<button role="menuitem" class="flex h-[22px] w-full items-center justify-between pl-[34px] pr-2">${sub ? t.slice(0, -1) + '<svg class="size-2"><use href="#right"/></svg>' : t}</button>`;
        });

        // price ticker
        const UP = '<span class="w-[18px] text-xs text-[#f11]">↑</span>', DN = '<span class="w-[18px] text-xs text-[#0ff]">↓</span>';
        $('ticker').innerHTML = each([
            ['', '', 'w-[182px]', UP, '+48.33'], ['東証G Core', '944.74', 'w-[607px]', DN, '+1.54'], ['日経平均', '42,000.76', 'w-[309px]', DN, '+941.61'],
            ['N225先物 2509', '42,000', 'w-[317px]', UP, '+1,000'], ['TOPIX', '3,036.25', 'w-[281px]', UP, '+48.33'], ['東証G Core', '944.74', 'w-[300px]', DN, '+1.54']
        ], ([n, p, w, a, c]) => `<div class="${w} flex shrink-0 items-center">${n && `<span class="mr-3">${n}</span><b class="mr-1.5 text-[#f00]">${p}</b>`}<span class="mr-2.5 text-[#2f4]">(12:46)</span>${a}<span class="text-[#f01010]">${c}</span></div>`);

        // sheet tabs
        const tabs = names => each(names, (t, i) => i ? `<button class="h-[22px] w-12 border-2 border-t-[#999] border-l-[#999] border-b-0 border-black bg-[#5a5a5a] text-[11px]">${t}</button>` : `<button class="mr-px h-6 w-[50px] border-t border-[#888] border-r-2 border-r-black bg-[#444] pb-0.5 text-[11px]">${t}</button>`);
        $('tabs1').innerHTML = tabs(['シート1', 'シート2', 'シート3', 'シート4', 'シート5', 'シート6', 'シート7', 'シート8', 'Mリスト', 'シート9']);
        $('tabs2').innerHTML = tabs(['シート1', 'シート2', 'シート3']);

        const th = t => `<th class="h-[19px] overflow-hidden border-l border-t border-[#aaa] bg-[#474747] p-0 font-normal text-[#ddd]">${t}</th>`;
        $('head1').innerHTML = each(['', '', 'ｺｰﾄﾞ', '', '銘柄名', '時刻', '現値', '', '前日比', '騰落率', '前終', ''], th);
        $('head2').innerHTML = each(['ｺｰﾄﾞ', '銘柄名', '現値', '時刻', '前日比', '騰落率', '始値', '時刻', ''], th);
        $('head3').innerHTML = each([['', 21], ['', 39], ['ｺｰﾄﾞ', 40], ['銘柄名', 62], ['市', 18], ['取引', 78], ['', 18], ['数量', 47], ['返済中数量', 68], ['', 29], ['返済数量', 85], ['損益', 77], ['損益率', 54], ['建玉単価', 56], ['時価', 54], ['時刻', 46], ['建玉金額', 56], ['評価額', 56], ['諸経費', 50], ['手数料', 50], ['建玉日', 92], ['', 33]],
            ([t, w]) => `<th style="width:${w}px" class="h-5 overflow-hidden border-l border-t border-[#999] bg-[#474747] p-0 font-normal text-[#bbb]">${t}</th>`);

        const dot = {
            r: '<i class="mx-auto block size-2 rounded-full bg-[radial-gradient(circle_at_3px_3px,#fff_1px,#f00000_1px)]"></i>',
            o: '<i class="mx-auto block size-2 rounded-full bg-[radial-gradient(circle_at_3px_3px,#fff_1px,#e87808_1px)]"></i>',
            g: '<i class="mx-auto block size-2 rounded-full bg-[radial-gradient(circle_at_3px_3px,#fff_1px,#6a6a6a_1px)]"></i>'
        };
        const arrow = { u: '<span class="text-[#f00]">↑</span>', d: '<span class="text-[#0ff]">↓</span>', r: '→' };
        const sign = v => v[0] === '-' ? 'text-[#0ff]' : 'text-[#f01010]';
        const fill = { R: 'bg-[#e63a14] text-white', B: 'bg-[#0078b8] text-white', '': 'text-[#ff0]' };
        $('watch').innerHTML = each(`gg|101||日経平均|12:46|42,000.76|d|+941.61|+2.29%|41,059.15|
gg|151||TOPIX|12:46|3,036.25|u|+48.33|+1.62%|2,987.92|R
rg|8306|・|三菱UFJ|12:46|2,147.5|d|+31.5|+1.49%|2,116.0|R
oo|8058|・|三菱商事|12:46|3,126.0|r|+44.0|+1.43%|3,082.0|
og|8604|・|野村|12:46|1,025.5|r|+8.0|+0.79%|1,017.5|
oo|9501|・|東電力HD|12:46|661.2|d|+13.3|+2.05%|647.9|B
og|1821|・|三住建設|12:45|598|r|-1|-0.17%|599|
rg|7261|・|マツダ|12:46|980.1|u|+53.8|+5.81%|926.3|
gg|5401|・|日本製鉄|12:46|2,986.5|u|+49.5|+1.69%|2,937.0|
rg|9104|・|商船三井|12:46|4,893.0|r|+77.0|+1.60%|4,816.0|
og|5202|・|板硝子|12:45|538|d|-14|-2.54%|552|
og|6501|・|日立|12:46|4,279.0|r|+72.0|+1.71%|4,207.0|
rg|9101|・|郵船|12:46|5,223.0|d|+69.0|+1.34%|5,154.0|B
gg|8562|・|福島銀|12:46|236|u|+3|+1.29%|233|
rg|9107|・|川崎船|12:46|2,213.0|r|+31.5|+1.44%|2,181.5|Y
ro|1808|・|長谷工|12:46|2,403.0|r|+44.5|+1.89%|2,358.5|Y
rg|5233|・|太平洋セメ|12:46|3,814.0|r|-92.0|-2.36%|3,906.0|
og|6753|・|シャープ|12:46|778.3|r|+11.1|+1.45%|767.2|
rg|8309|・|三井住友トラ|12:46|4,065.0|r|+24.0|+0.59%|4,041.0|
oo|6701|・|NEC|12:46|4,652.0|d|-30.0|-0.64%|4,682.0|
og|7012|・|川崎重|12:46|11,065.0|r|-15.0|-0.14%|11,080.0|
rg|7201|・|日産自|12:46|333.1|r|+9.5|+2.94%|323.6|
gg|6752|・|パナソニックHD|12:46|1,537.5|d|+28.5|+1.89%|1,509.0|
og|7011|・|三菱重|12:46|3,885.0|d|-7.0|-0.18%|3,892.0|BY
og|6702|・|富士通|12:46|3,546.0|u|+20.0|+0.57%|3,526.0|
oo|8515|・|アイフル|12:46|479|d|+20|+4.36%|459|
og|7211|・|三菱自|12:46|407.1|r|+12.7|+3.22%|394.4|`.split('\n'), (line, i) => {
            const [d, code, mk, name, time, price, a, chg, pct, prev, flag] = line.split('|');
            return `<tr class="h-4 ${i % 2 ? 'bg-[#121212]' : 'bg-[#0c0d16]'} text-right text-[11px] leading-4">
                <td>${dot[d[0]]}</td><td>${dot[d[1]]}</td><td class="pl-1 text-left">${code}</td><td class="text-center">${mk}</td><td class="pl-1 text-left text-[#ff0] ${name.length > 6 ? '' : 'text-xs leading-4'}">${name}</td>
                <td class="pr-0.5 text-[#2f4]">${time}</td><td class="pr-0.5 ${fill[flag.replace('Y', '')]}">${price}</td><td class="text-center text-xs leading-4">${arrow[a]}</td>
                <td class="pr-0.5 ${sign(chg)}">${chg}</td><td class="pr-0.5 ${sign(pct)}">${pct}</td><td class="pr-0.5">${prev}</td><td class="${flag.includes('Y') ? 'bg-[#ffdf00]' : ''}"></td></tr>`;
        });
        $('index').innerHTML = each([
            ['101', '日経平均', '42,000.76', '+941.61', '+2.29%', '41,283.70', '4'], ['151', 'TOPIX', '3,036.25', '+48.33', '+1.62%', '3,001.09', ''],
            ['103', '日経平均３００', '649.84', '+10.98', '+1.72%', '641.89', ''], ['154', 'グロース250指数', '781.12', '-0.33', '-0.04%', '783.03', '']
        ], ([c, n, p, chg, pct, o, x], i) => `<tr class="h-4 ${i % 2 ? 'bg-[#1c1c1c]' : 'bg-[#0c0d16]'} text-right text-[11px] leading-4">
                <td class="pl-1 text-left">${c}</td><td class="pl-1 text-left text-xs leading-4 text-[#ff0]">${n}</td><td class="pr-0.5 ${fill[i === 1 ? 'R' : '']}">${p}</td><td class="pr-0.5 text-[#2f4]">12:46</td>
                <td class="pr-0.5 ${sign(chg)}">${chg}</td><td class="pr-0.5 ${sign(pct)}">${pct}</td><td class="pr-0.5 text-[#ff0]">${o}</td><td class="pr-0.5 text-[#2f4]">09:00</td><td class="text-[#ff0]">${x}</td></tr>`);

        // history slots
        $('slots').innerHTML = '<div class="mr-0.5 w-8 shrink-0 bg-[#e2e2e2]"></div>' + '<div class="mr-0.5 w-[108px] shrink-0 bg-[#e2e2e2] pr-1.5 text-right text-[10px] leading-[10px] text-black">×</div>'.repeat(8);

        // ladder
        const cell = (c = '', t = '') => `<td class="border-r border-[#262626] px-1 ${c}">${t}</td>`;
        const rung = (bg, sell, mid, midc, buy, sc = '', bc = '', ld = '', rd = '') => `<tr class="h-4 ${bg} text-right text-[11px] leading-4 text-[#ddd]">${cell()}${cell()}${cell()}${cell(sc, sell)}${cell('', ld)}<td class="border-r border-[#262626] text-center ${midc}">${mid}</td>${cell('', rd)}${cell(bc, buy)}${cell()}${cell()}<td></td></tr>`;
        const sells = { 6223: '3,400', 6222: '3,100', 6221: '2,400', 6220: '7,100', 6219: '1,600', 6218: '3,800', 6217: '200' };
        const buys = { 6216: '1,300', 6215: '1,600', 6214: '1,300', 6213: '2,500', 6212: '2,000', 6211: '3,600', 6210: '3,000', 6209: '3,100', 6208: '2,300', 6207: '3,900' };
        let rungs = rung('bg-[#272a35]', '', 'TOTAL', '', '') + rung('bg-[#1d1f29]', '', '成行', 'text-xs leading-4 text-[#ff8c00]', '') + rung('bg-[#272a35]', '1,504,200', 'OVER', '', '');
        for (let p = 6223; p >= 6207; p--) {
            const color = p === 6217 ? 'bg-[#e63a14] text-white' : p > 6210 ? 'text-[#ff3c14]' : p < 6210 ? 'text-[#90d0f0]' : '';
            rungs += rung(p % 2 ? 'bg-black' : 'bg-[#121212]', sells[p] || '', '6,' + (p - 6000) + '.0', color, buys[p] || '',
                p === 6217 ? 'bg-[#b088b0] text-black' : '', p === 6216 ? 'bg-[#c89ac8] text-black' : p === 6215 ? 'bg-[#b088b0] text-black' : '',
                p === 6217 ? '<i class="block size-0.5 bg-[#08e]"></i>' : '', p === 6216 ? '<i class="block size-0.5 bg-[#e00]"></i>' : '');
        }
        $('ladder').innerHTML = rungs + rung('bg-[#272a35]', '', 'UNDER', '', '592,700');

        // quote
        const y = 'text-[#ff0]';
        $('quoteL').innerHTML = `
            <div class="flex h-4"><b class="w-[94px] bg-[#e63a14] pr-0.5 text-right text-base leading-4">6,217.0</b><span class="pl-1 text-xs leading-4">→</span><span class="ml-auto pr-1.5 text-[#2f4]">12:46</span></div>
            <div class="flex h-4 text-right text-[#f01010]"><span class="w-[84px]">+7.0</span><span class="flex-1 pr-1">+0.11%</span></div>
            <div class="flex h-4 text-right"><span class="pl-0.5 text-xs leading-4">売</span><span class="flex-1 pr-0.5 ${y}">6,217.0</span><span class="h-[15px] w-14 bg-[#c89ac8] pr-0.5 text-black">200</span><span class="w-0.5"></span></div>
            <div class="flex h-4 text-right"><span class="pl-0.5 text-xs leading-4">買</span><span class="flex-1 pr-0.5 ${y}">6,216.0</span><span class="h-[15px] w-14 bg-[#c89ac8] pr-0.5 text-black">1,300</span><span class="w-0.5"></span></div>
            <div class="flex h-4 text-right"><span class="w-7 pl-0.5 text-left">V</span><span class="h-[15px] w-[66px] bg-[#ffdf00] pr-0.5 text-black">6,368,200</span><span class="flex-1 pr-1 text-[#2f4]">12:46</span></div>` +
            each([['代金', '39,702.4025', '百万円', 'w-11'], ['VW', '6,234.58', '円', 'w-4'], ['連PER', '35.1', '倍', 'w-4'], ['PER', '', '倍', 'w-4'], ['PBR', '13.8', '倍', 'w-4'], ['YLD', '0.87', '%', 'w-4']],
                ([l, v, u, w]) => `<div class="flex h-4 pl-0.5 pr-[3px]"><span class="text-xs leading-4">${l}</span><span class="ml-auto ${y}">${v}</span><span class="${w} text-right text-xs leading-4">${u}</span></div>`);
        $('quoteR').innerHTML = each([['前日', '6,210.0', '25/08/07'], ['O', '6,212.0', '09:00'], ['H', '6,287.0', '09:50'], ['L', '6,173.0', '09:01'], ['YH', '7,315.0', '25/02/18'], ['YL', '4,937.0', '25/01/21']],
            ([l, v, d]) => `<div class="flex h-4"><span class="w-8 text-xs leading-4">${l}</span><span class="w-[57px] text-right ${y}">${v}</span><span class="flex-1 text-right text-[#2f4]">${d}</span></div>`);
        const row = (a, b = '', c = '', d = '', k = y) => `<tr class="h-4 ${k} text-right"><td class="text-left text-white">${a}</td><td>${b}</td><td>${c}</td><td>${d}</td></tr>`;
        $('margin').innerHTML = '<tr class="h-4"><td colspan="4"><span class="pr-0.5 text-[#f00]">証金残</span> 確報</td></tr>' + row('(08/07)', '貸株', '融資', '差引', '') + row('新規', '0千株', '1.8千株', '-') + row('返済', '0.1千株', '6.8千株', '-') +
            row('残', '1.5千株', '143.6千株', '142.1千株') + row('前日比', '-0.1千株', '-5千株', '-4.9千株') + row('逆日歩', '---/0日') + row('回転日数', '', '16.9日') + row('貸借倍率', '', '95.73倍') + row('') +
            '<tr class="leading-[13px]"><td class="text-[#f00]">信用残</td></tr>' + row('(08/01)', '売残', '買残', '倍率', '') + row('', '1,118.7千株', '8,259千株', '7.38倍') + row('前週比', '-73.7千株', '-697.3千株');

        // news list
        $('news').innerHTML = each([
            ['12:44', 'ハピネットが新値追い、ゲーム・アミューズメント好調で4～6月期最終利益39%増'],
            ['12:40', '【ゴールデンクロス／デッドクロス】&nbsp; 12:39現在&nbsp; GC＝ 65 銘柄&nbsp; DC＝ 85 銘柄 (8月8日)'],
            ['12:40', '【MACD｜買い／売りサイン】&nbsp; 12:39現在&nbsp; 買い＝ 29 銘柄&nbsp; 売り＝ 114 銘柄 (8月8日)'],
            ['12:40', '【パラボリック｜買い／売り・転換】&nbsp; 12:39現在&nbsp; 買い＝ 165 銘柄&nbsp; 売り＝ 149 銘柄 (8月8日)']
        ], ([t, s], i) => `<tr class="${i ? (i % 2 ? 'h-[19px] bg-[#eee]' : 'h-[19px] bg-white') : 'h-5 bg-[#2c3098] text-white'}"><td class="w-[35px] pl-2"><svg class="size-4 ${i ? 'fill-white stroke-[#888]' : 'fill-white'}"><use href="#star"/></svg></td><td class="w-[61px] text-[11px]">25/08/08</td><td class="w-8 text-[11px]">${t}</td><td>${s}</td></tr>`);

        // Candles: colour, body top, body bottom, high, low (a third of a pixel per unit, 15 units apart)
        const day = 'g939,948 r945,948 r945,949 g957,969,,975 r952,967 r953,956,950,965 g955,966,948 r957,964 r951,959 g950,966 r959,965,,984 r947,966 g948,953,943,958 g952,958,,964 g956,969 g968,974 g974,977,,988 g972,986 g984,995 g993,1010 r996,1010 r998,1001,995,1010 r987,1001 g988,1001,,1005 r998,1000,995,1004 r984,1001 r977,987 r969,981 g969,983,963 r981,984,978,987 r979,984,,990 g978,990 r985,989 r982,986,978 r980,987 g972,990 g988,995,,1004 r976,995 g978,980 r969,980 r834,876,,891 r797,834,792,840 r741,800,732 g742,755,,768 r742,756,,768 r714,744 r687,717,684 r657,690 g654,662,645,672 r655,660,650,683 g660,683,,702 r640,683 g639,645,627 r618,641 g621,624,,640 g623,636,618,645 r615,638,609 r612,616,,645 r608,615,600 g606,620 g621,638 r622,635 g620,641,603 r638,641,633 r624,638,,645 r617,626 r612,621 r606,617 r590,608 r582,590 r581,585 r570,581,565 r570,574,,583 g570,581,,587 r567,579';
        const year = 'g723,745 r737,752 r690,703,684 g669,686 r651,666,643 r629,635,618 r616,621,612,628 r605,616,600,624 r597,602,585 g588,593,584 r588,591,,609 r558,568 g546,552,,567 g519,524,504 g524,533,520,555 g543,555 g546,554,,567 r551,558 g538,556 g543,560 r570,575,564,580 r556,563,549 r541,553 r525,544 g503,527 r487,509 r495,520,489 g514,522,,528 g513,524 r510,514,505 g525,540 r524,533 g510,513 g506,513,500 g504,511,,517 g507,516 g520,540,,549 r519,523,515,530 r510,518 r490,521 g493,508 g510,525 g530,534,,546 g507,516 g507,516,,525 r493,513 r461,483 g446,453,438 g454,470 r474,483 r471,476 g460,475 g474,489 r481,494 g470,474,,484 g474,489,,498 g473,477,462,480 r477,486,469 g468,480 g473,483 r463,486 g454,468 g464,468,441,480 r384,438,375 r339,362,333 g347,367 g360,383 g396,402,,408 r391,401 r370,387 r366,370,354 r393,408,,423 r376,383,370,390 r347,375 r329,352 r286,320';
        const candles = (src, top) => each(src.split(' '), (s, i) => {
            const [t, b, h, l] = s.slice(1).split(',').map(Number), x = 27 + i * 15, c = s[0] === 'r' ? '#e00000' : '#00c800';
            return `<path d="M${x} ${(h || t) - top}V${(l || b) - top}" stroke="${c}" stroke-width="3"/><rect x="${x - 6}" y="${t - top}" width="12" height="${Math.max(3, b - t)}" fill="${c}"/>`;
        });
        const charts = [
            { code: '101', name: '日経平均', hot: 1, foot: '5分足', h: 246, w: 399, top: 4, split: 169, base: 222, flat: '#2060d0', src: day, off: 525,
              solid: [23, 208, 363], dots: [53, 113, 173, 268, 328, 393], vol: '売買高 (6 ,12 ,24)', grid: [[14, '42000.00'], [85, '41500.00'], [156, '41000.00']],
              ticks: [[23, '7/12:30', 1], [113, '14'], [173, '15'], [208, '8/9:00', 1], [268, '10'], [328, '11'], [363, '12:30', 1], [393, '13']],
              line: '4,17 22,16 40,15 54,16 70,15 80,14 94,15 100,13 112,12 135,13 152,11 160,12 190,12 235,11 262,9 280,10 302,9 320,7 340,8', rest: '340,8 360,8 370,10 383,8 398,8 405,4 425,2 447,1', knob: 335, grip: 397 },
            { code: '151', name: 'TOPIX', hot: 0, foot: '日足', h: 254, w: 404, top: 3, split: 175, base: 231, flat: '#1a7a1a', src: year, off: 249,
              solid: [249], dots: [44, 144, 359], vol: '売買高 (5 ,25 ,75)', grid: [[23, '3000.00'], [53, '2900.00'], [83, '2800.00'], [113, '2700.00'], [142, '2600.00']],
              ticks: [[44, '5'], [144, '6'], [249, '2025/7', 1], [359, '8']],
              line: '2,16 20,17 40,14 60,14 80,12 100,12 120,13 140,11 160,9 180,7 200,5 210,6 235,5 250,3 262,5 265,12 280,7 300,6 320,7 340,6 370,5 380,7 388,12 393,6', rest: '393,8 408,5 420,6 440,4 453,2', knob: 391, grip: 424 }
        ];
        const handle = '<i class="h-4 w-1 border-l-2 border-dotted border-black"></i>';
        const tool = (id, name) => `<button aria-label="${name}" class="size-4 text-[#999]"><svg class="size-4"><use href="#${id}"/></svg></button>`;
        const more = '<button aria-label="その他" class="grid h-[23px] w-[11px] place-items-end justify-center bg-linear-to-b from-[#555] to-[#888] pb-1"><svg class="h-2 w-2"><use href="#down"/></svg></button>';
        $('charts').innerHTML = each(charts, k => `
        <section class="${k.hot ? 'h-[336px] shrink-0' : 'min-h-0 flex-1'} flex flex-col overflow-hidden border-2 border-r-0 border-[#f0f0f0] bg-[#333]">
            <div class="flex h-[25px] shrink-0 items-center bg-linear-to-b from-[#14166a] to-[#1c2086] pb-px pl-0.5 pr-1">
                <svg class="size-[18px] border border-[#888]"><use href="#chart"/></svg>
                <h2 class="flex-1 pl-[3px] text-[#c8c8c8]">チャート: ${k.code}</h2>
                <button class="relative h-4 w-[57px] overflow-hidden border font-[Roboto] text-[13px] leading-[13px] font-medium ${k.hot ? 'border-[#b56] bg-[#d03060] text-[#ffc810]' : 'border-[#a67] bg-[#85204a] text-[#b08a10]'}"><span class="absolute left-0 top-0 size-3 bg-linear-to-br from-[#d68] from-50% to-transparent to-50%"></span>HOT</button>
                <button aria-label="閉じる" class="ml-0.5 size-[15px] border border-[#fcc] bg-[#d8a8a0]"><svg class="size-full"><use href="#close"/></svg></button>
            </div>
            <div class="flex h-[17px] shrink-0 items-center bg-[#f60a5e] pl-1.5 pr-2.5">
                <input aria-label="銘柄コード" value="${k.code}" class="h-[17px] w-[103px] bg-white pl-1.5 text-[11px] text-black">
                <button aria-label="銘柄選択" class="grid h-[17px] w-[17px] place-items-center border border-[#888] bg-[#e8e8e8] text-black"><svg class="size-2"><use href="#down"/></svg></button>
                <span class="flex-1 pl-1.5 leading-[15px]">${k.name}</span><span class="pr-3 leading-[15px]">東証</span><span class="text-[#c0b0b8] leading-[15px]">25/08/08</span>
            </div>
            <div class="flex h-[26px] shrink-0 items-center gap-1.5 border-b border-[#666] pl-1.5 text-black">
                ${handle}
                <span class="relative -ml-1 flex h-[23px] w-[85px] bg-white"><select aria-label="種類" class="w-full appearance-none pl-1 text-[11px] text-[#222]"><option>ローソク</option></select><svg class="pointer-events-none absolute right-1 top-2 size-1.5"><use href="#down"/></svg></span>
                <span class="relative -ml-1 flex h-[23px] w-[70px] bg-white ${k.hot ? '' : 'border border-[#0078d7]'}"><select aria-label="足種" class="w-full appearance-none pl-1 text-[11px] text-[#222]"><option>${k.foot}</option></select><svg class="pointer-events-none absolute right-0 top-0 h-full w-3 px-[3px] ${k.hot ? '' : 'border-l border-[#0078d7] bg-[#b8d8f4]'}"><use href="#down"/></svg></span>
                <span class="pl-0.5">${handle}</span>${tool('lens', 'ズーム')}${tool('cross', '十字線')}<i class="w-0"></i>${handle}${tool('trend', 'トレンド')}${tool('lens2', '検索')}${tool(k.hot ? 'bars' : 'barsoff', '指標')}${tool('yen', '株価')}${k.hot ? '<button aria-label="警告" class="size-4 bg-[#999]"><svg viewBox="0 0 16 16"><path d="M8 2 14.500 14h-13z" fill="#aaa" stroke="#777"/><path d="M8 6v4M8 11.500v1.500" stroke="#666" stroke-width="1.500"/></svg></button>' : tool('warn', '警告')}
                ${handle}${tool('pencil', '描画')}<span class="flex-1"></span><span class="text-white">${more}</span><span class="-ml-1">${handle}</span>${tool('candle', '幅')}<span class="ml-1 text-white">${more}</span>
            </div>
            <svg viewBox="0 0 453 ${k.h}" class="w-full shrink-0" font-size="12" fill="#eee">
                <rect x="4.500" y="${k.top + .5}" width="${k.w}" height="${k.base - k.top}" fill="#000" stroke="#bbb"/>
                <path d="${each(k.dots, x => `M${x + .5} ${k.top + 1}V${k.base}`)}" stroke="#444" stroke-dasharray="1 2"/>
                <path d="${each(k.grid, g => `M5 ${g[0] + .5}H${k.w + 4}`)}" stroke="#444" stroke-dasharray="3 1"/>
                <path d="${each(k.solid, x => `M${x + .5} ${k.top + 1}V${k.base}`)}" stroke="#444"/>
                <path d="M5 ${k.split + .5}H${k.w + 4}" stroke="#bbb"/>
                <path d="M5 ${k.base - 1.5}H${k.w - 20}" stroke="${k.flat}"/>
                <g transform="scale(.3333)" shape-rendering="crispEdges">${candles(k.src, k.off)}</g>
                <path d="M${k.w - 17} 13.500l4-4v2h4v4h-4v2z" fill="#f00" stroke="#fff"/>
                <g fill="#bbb">${each([12, k.split - 7, k.split + 4, k.base - 2], v => `<path d="M${k.w + 1} ${v - 2}v5l-5-2.500z"/>`)}<path d="M${k.w - 16} ${k.split - 3}h6l-3-4zM${k.w - 16} ${k.base - 4}h6l-3-4z"/></g>
                <text x="10" y="${k.top + 14}" fill="#bbb">${k.foot}</text>
                <text x="10" y="${k.split + 15}" fill="#bbb">${k.vol}</text>
                <g font-size="11">${each(k.grid, g => `<text x="${k.w + 6}" y="${g[0] + 4}">${g[1]}</text>`)}<text x="${k.w + 6}" y="${k.base + 2}">0</text></g>
                ${each(k.ticks, ([x, t, b]) => `<text x="${x}" y="${k.base + 16}" text-anchor="middle" font-weight="${b ? 700 : 400}">${t}</text><path d="M${x + .5} ${k.base + 1}v3" stroke="#fff"/>`)}
            </svg>
            <svg viewBox="0 0 453 18" class="mt-auto w-full shrink-0 bg-[#222]">
                <path d="M${k.line.replaceAll(' ', 'L')}V18H0z" fill="#5a5a5a"/>
                <rect x="${k.knob + 5}" width="${448 - k.knob}" height="18" fill="#b8861c"/><rect x="${k.knob}" width="4" height="18" fill="#888"/>
                <path d="M${k.line.replaceAll(' ', 'L')}" stroke="#fff" fill="none"/><path d="M${k.rest.replaceAll(' ', 'L')}" stroke="#fff" fill="none"/>
                <path d="M${k.grip - 3} 6v7M${k.grip} 6v7M${k.grip + 3} 6v7" stroke="#543" stroke-width="2"/>
            </svg>
        </section>`);
    </script>
</body>
</html>
